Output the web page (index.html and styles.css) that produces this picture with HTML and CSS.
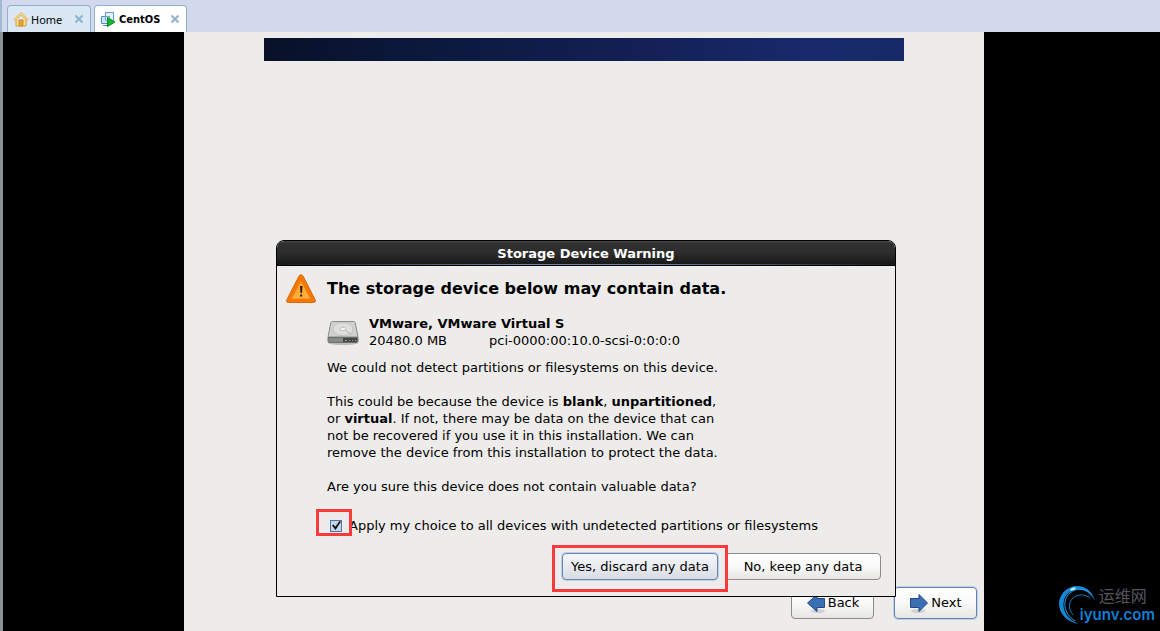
FILE: index.html
```html
<!DOCTYPE html>
<html lang="en">
<head>
    <meta charset="UTF-8">
    <meta name="viewport" content="width=device-width, initial-scale=1.0">
    <title>CentOS - Storage Device Warning</title>
    <link rel="stylesheet" href="styles.css">
</head>
<body>

    <nav class="tabs">
        <div class="tab">
            <svg class="tab-icon" viewBox="0 0 16 16">
                <path d="M3 8v7h10V8" fill="#f8dfa0" stroke="#dc9a3c"/>
                <path d="M1 8.500L8 1.500l7 7-1 1-6-5.500-6 5.500z" fill="#fbe8a6" stroke="#e3a74a"/>
                <path d="M6 9h4v6H6z" fill="#d9ab35" stroke="#d48b2c"/>
            </svg>
            <a href="#home">Home</a>
            <button class="tab-close" aria-label="Close Home">
                <svg viewBox="0 0 10 10"><path d="M1.500 1.500l7 7M8.500 1.500l-7 7"/></svg>
            </button>
        </div>
        <div class="tab active">
            <svg class="tab-icon" viewBox="0 0 16 16">
                <path d="M5.500 1.500h8v8h-8z" fill="#e4f1fc" stroke="#5b9bd8"/>
                <path d="M1.500 5.500h8v7h-8z" fill="#cfe5f8" stroke="#4a8fd2"/>
                <path d="M5.500 5.500h4v4h-4z" fill="#f3f9fe" stroke="#68a5dd"/>
                <path d="M3 14.500h6" stroke="#4a8fd2"/>
                <path d="M7.500 6.500v9l7.500-4.500z" fill="#17b52d" stroke="#0c8f20"/>
            </svg>
            <a href="#centos">CentOS</a>
            <button class="tab-close" aria-label="Close CentOS">
                <svg viewBox="0 0 10 10"><path d="M1.500 1.500l7 7M8.500 1.500l-7 7"/></svg>
            </button>
        </div>
    </nav>

    <main class="console">
        <section class="installer">
            <div class="banner"></div>

            <footer class="installer-nav">
                <button class="btn">
                    <svg class="arrow" viewBox="0 0 20 20">
                        <ellipse cx="12" cy="18" rx="7" ry="2" fill="#000" opacity=".12"/>
                        <path d="M1.500 10L11 1.500v4h7.500v9H11v4z" fill="#3b6fb4" stroke="#204a87"/>
                    </svg>
                    Back
                </button>
                <button class="btn btn-default">
                    <svg class="arrow" viewBox="0 0 20 20">
                        <ellipse cx="9" cy="18" rx="7" ry="2" fill="#000" opacity=".12"/>
                        <path d="M18.500 10L10 1.500v4H1.500v9H10v4z" fill="#3b6fb4" stroke="#204a87"/>
                    </svg>
                    Next
                </button>
            </footer>

            <div class="dialog" role="dialog" aria-labelledby="dialogTitle">
                <div class="dialog-title" id="dialogTitle">Storage Device Warning</div>
                <div class="dialog-body">
                    <svg class="warning-icon" viewBox="0 0 30 30">
                        <path d="M15 .8c1 0 1.800.7 2.300 1.700l11.800 23.200c.8 1.700 0 2.800-1.500 2.800H2.400c-1.500 0-2.300-1.100-1.500-2.800L12.700 2.500c.5-1 1.300-1.700 2.300-1.700z" fill="#f57900" stroke="#d9680a"/>
                        <path d="M15 8L6 24.500h18z" fill="#fcaf3e" stroke="#fb9a2c" stroke-linejoin="round"/>
                        <path d="M14 12h2.500l-.5 7h-1.500zM14.200 20.500h2v2h-2z" fill="#2b1a08"/>
                    </svg>
                    <div class="message">
                        <h1>The storage device below may contain data.</h1>

                        <div class="device">
                            <svg class="disk-icon" viewBox="0 0 32 26">
                                <ellipse cx="16" cy="23" rx="15" ry="2" fill="#000" opacity=".2"/>
                                <path d="M5.500 1.500h21c1 0 1.500.5 1.700 1.300L31 17H1L3.800 2.800c.2-.8.700-1.300 1.700-1.300z" fill="#d0d2cd" stroke="#8a8c87"/>
                                <path d="M1 17.500h30v3.500c0 1-.5 1.500-1.500 1.500h-27C1.500 22.500 1 22 1 21z" fill="#888a85" stroke="#6a6c68"/>
                                <ellipse cx="16" cy="9" rx="10" ry="6.500" fill="#dfe0dc" stroke="#c2c4bf"/>
                                <ellipse cx="16" cy="9" rx="3" ry="1.700" fill="#f4f4f3" stroke="#c0c3bc"/>
                                <path d="M18 10l7 5" stroke="#b8bab5"/>
                                <path d="M16 18h14v4H16z" fill="#454845"/>
                                <path d="M18 20.500h2m2 0h1m2 0h1m2 0h1" stroke="#9a9c98"/>
                            </svg>
                            <div class="device-info">
                                <strong>VMware, VMware Virtual S</strong>
                                <div class="device-details">
                                    <span>20480.0 MB</span>
                                    <span>pci-0000:00:10.0-scsi-0:0:0:0</span>
                                </div>
                            </div>
                        </div>

                        <p>We could not detect partitions or filesystems on this device.</p>
                        <p>This could be because the device is <b>blank</b>, <b>unpartitioned</b>, or <b>virtual</b>. If not, there may be data on the device that can not be recovered if you use it in this installation. We can remove the device from this installation to protect the data.</p>
                        <p>Are you sure this device does not contain valuable data?</p>

                        <div class="apply-all">
                            <input type="checkbox" id="applyAll" checked>
                            <label for="applyAll">Apply my choice to all devices with undetected partitions or filesystems</label>
                            <span class="mark mark-check"></span>
                        </div>
                    </div>
                </div>
                <div class="dialog-buttons">
                    <div class="marked">
                        <button class="btn btn-default btn-focus">Yes, discard any data</button>
                        <span class="mark mark-button"></span>
                    </div>
                    <button class="btn">No, keep any data</button>
                </div>
            </div>
        </section>
    </main>

    <div class="watermark">
        <svg viewBox="0 0 38 42">
            <path d="M21 40C8 38 1 29 1 19 2 6 15-1 25 3c6 2 10 7 12 14C32 8 25 4 17 6 8 8 4 16 6 25c2 7 7 12 15 15z" fill="#1487d8"/>
            <path d="M17 37C5 29 4 16 12 9c7-6 16-5 22 2" fill="none" stroke="#1ca4f2" stroke-width="1"/>
            <path d="M15 31C9 24 11 15 18 12c5-2 10-1 14 2" fill="none" stroke="#147cc0" stroke-width="1"/>
            <ellipse cx="15" cy="5" rx="3" ry="1.300" fill="#b9e9ff" transform="rotate(-20 15 5)"/>
        </svg>
        <div class="watermark-text">
            <span class="watermark-name" lang="zh">运维网</span>
            <span class="watermark-site">iyunv.com</span>
        </div>
    </div>

</body>
</html>
```
FILE: styles.css
```css
/* General Page Styles */
* {
    box-sizing: border-box;
}

body {
    margin: 0;
    min-height: 100vh;
    display: flex;
    flex-direction: column;
    position: relative;
    background-color: #d3d9ec;
    color: #000;
    font-family: "DejaVu Sans", sans-serif;
    font-size: 13px;
    line-height: 17px;
}

button {
    font: inherit;
    color: inherit;
    cursor: pointer;
}

/* Tabs */
.tabs {
    display: flex;
    gap: 3px;
    height: 32px;
    padding: 5px 7px 0 5px;
    border-left: 2px solid #9db9d3;
}

.tab {
    display: flex;
    align-items: center;
    width: 84px;
    padding: 0 6px 0 5px;
    background: #dae7f5;
    border: 1px solid #91b0cf;
    border-bottom: none;
    border-radius: 4px 4px 0 0;
    font-family: "Noto Sans", sans-serif;
    font-size: 11px;
}

.tab.active {
    width: 93px;
    background: #fff;
    font-family: "DejaVu Sans Condensed", "DejaVu Sans", sans-serif;
    font-weight: bold;
}

.tab a {
    color: #000;
    text-decoration: none;
}

.tab-icon {
    width: 16px;
    height: 16px;
    margin-right: 2px;
}

.tab.active .tab-icon {
    margin-right: 3px;
}

.tab-close {
    display: flex;
    margin-left: auto;
    padding: 0;
    border: none;
    background: none;
}

.tab-close svg {
    width: 10px;
    height: 10px;
    stroke: #91b1cd;
    stroke-width: 2;
}

/* Console */
.console {
    flex: 1;
    display: grid;
    grid-template-columns: 1fr minmax(0, 800px) 1fr;
    padding-left: 5px;
    background: #000;
    border-left: 3px solid #8d9298;
}

.installer {
    grid-column: 2;
    position: relative;
    display: flex;
    flex-direction: column;
    background: #edeceb;
}

.banner {
    height: 23px;
    margin: 6px 80px 0;
    background: linear-gradient(90deg, #091129, #0c1a40 30%, #131f52 55%, #182a6c 85%, #172a67);
}

.installer-nav {
    display: flex;
    justify-content: flex-end;
    gap: 20px;
    margin-top: auto;
    padding: 0 7px 12px;
}

/* Buttons */
.btn {
    display: flex;
    align-items: center;
    justify-content: center;
    height: 27px;
    min-width: 156px;
    padding: 0 8px 1px;
    border: 1px solid #8c8b89;
    border-radius: 4px;
    background: linear-gradient(#fff, #f9f9f8 50%, #e7e6e4);
}

.btn-default {
    border-color: #5f86b5;
    box-shadow: 0 0 0 1px #bfd0e4;
}

.btn-focus {
    background: linear-gradient(#f4f6fa, #e8ebf0 50%, #d8dce3);
}

.installer-nav .btn {
    height: 32px;
    min-width: 83px;
    gap: 2px;
}

.arrow {
    width: 20px;
    height: 20px;
}

/* Dialog */
.dialog {
    position: absolute;
    top: 208px;
    left: 92px;
    right: 88px;
    background: #edeceb;
    border: 1px solid #000;
    border-radius: 8px 8px 0 0;
}

.dialog-title {
    height: 25px;
    border-bottom: 1px solid #000;
    border-radius: 7px 7px 0 0;
    background:
        linear-gradient(90deg, #1a1a1a, #6c84b0 40%, #6c84b0 60%, #1a1a1a) bottom / 100% 1px no-repeat,
        linear-gradient(#4a4a4a, #303030 2px, #2d2d2d 50%, #171717);
    color: #fff;
    font-weight: bold;
    line-height: 25px;
    text-align: center;
}

.dialog-body {
    display: flex;
    gap: 11px;
    padding: 8px 9px 0;
}

.warning-icon {
    flex: none;
    width: 30px;
    height: 30px;
}

.message {
    flex: 1;
}

.message h1 {
    margin: 4px 0 16px;
    font-size: 16px;
    line-height: 21px;
}

.message p {
    max-width: 400px;
    margin: 0 0 17px;
}

.device {
    display: flex;
    gap: 10px;
    margin-bottom: 10px;
}

.disk-icon {
    width: 32px;
    height: 26px;
    margin-top: 5px;
}

.device-details {
    display: flex;
    gap: 42px;
}

.apply-all {
    position: relative;
    display: flex;
    align-items: center;
    gap: 7px;
    margin-top: 22px;
    padding-left: 3px;
}

.apply-all input {
    appearance: none;
    width: 12px;
    height: 12px;
    margin: 0;
    border: 1px solid #4c74a8;
    background: #c5d6ec;
}

.apply-all input:checked::before {
    content: "";
    display: block;
    width: 10px;
    height: 10px;
    background: #111;
    clip-path: polygon(10% 50%, 25% 40%, 42% 62%, 85% 5%, 100% 12%, 45% 95%);
}

.dialog-buttons {
    display: flex;
    justify-content: flex-end;
    gap: 7px;
    padding: 19px 14px 16px;
}

/* Red highlight frames */
.marked {
    position: relative;
}

.mark {
    position: absolute;
    border: 3px solid #fb3b3b;
    pointer-events: none;
}

.mark-check {
    top: -8px;
    left: -11px;
    width: 36px;
    height: 27px;
}

.mark-button {
    inset: -8px -10px -12px;
}

/* Watermark */
.watermark {
    position: absolute;
    right: 5px;
    bottom: 5px;
    display: flex;
    font-family: "Liberation Sans", "Noto Sans CJK SC", sans-serif;
}

.watermark svg {
    width: 38px;
    height: 42px;
    margin-right: -16px;
}

.watermark-text {
    display: flex;
    flex-direction: column;
}

.watermark-name {
    padding: 4px 0 0 19px;
    color: #55555c;
    font-size: 16px;
    line-height: 18px;
}

.watermark-site {
    color: #0f7fd6;
    font-family: Inter, sans-serif;
    font-size: 15px;
    font-weight: 600;
    line-height: 18px;
}
```
